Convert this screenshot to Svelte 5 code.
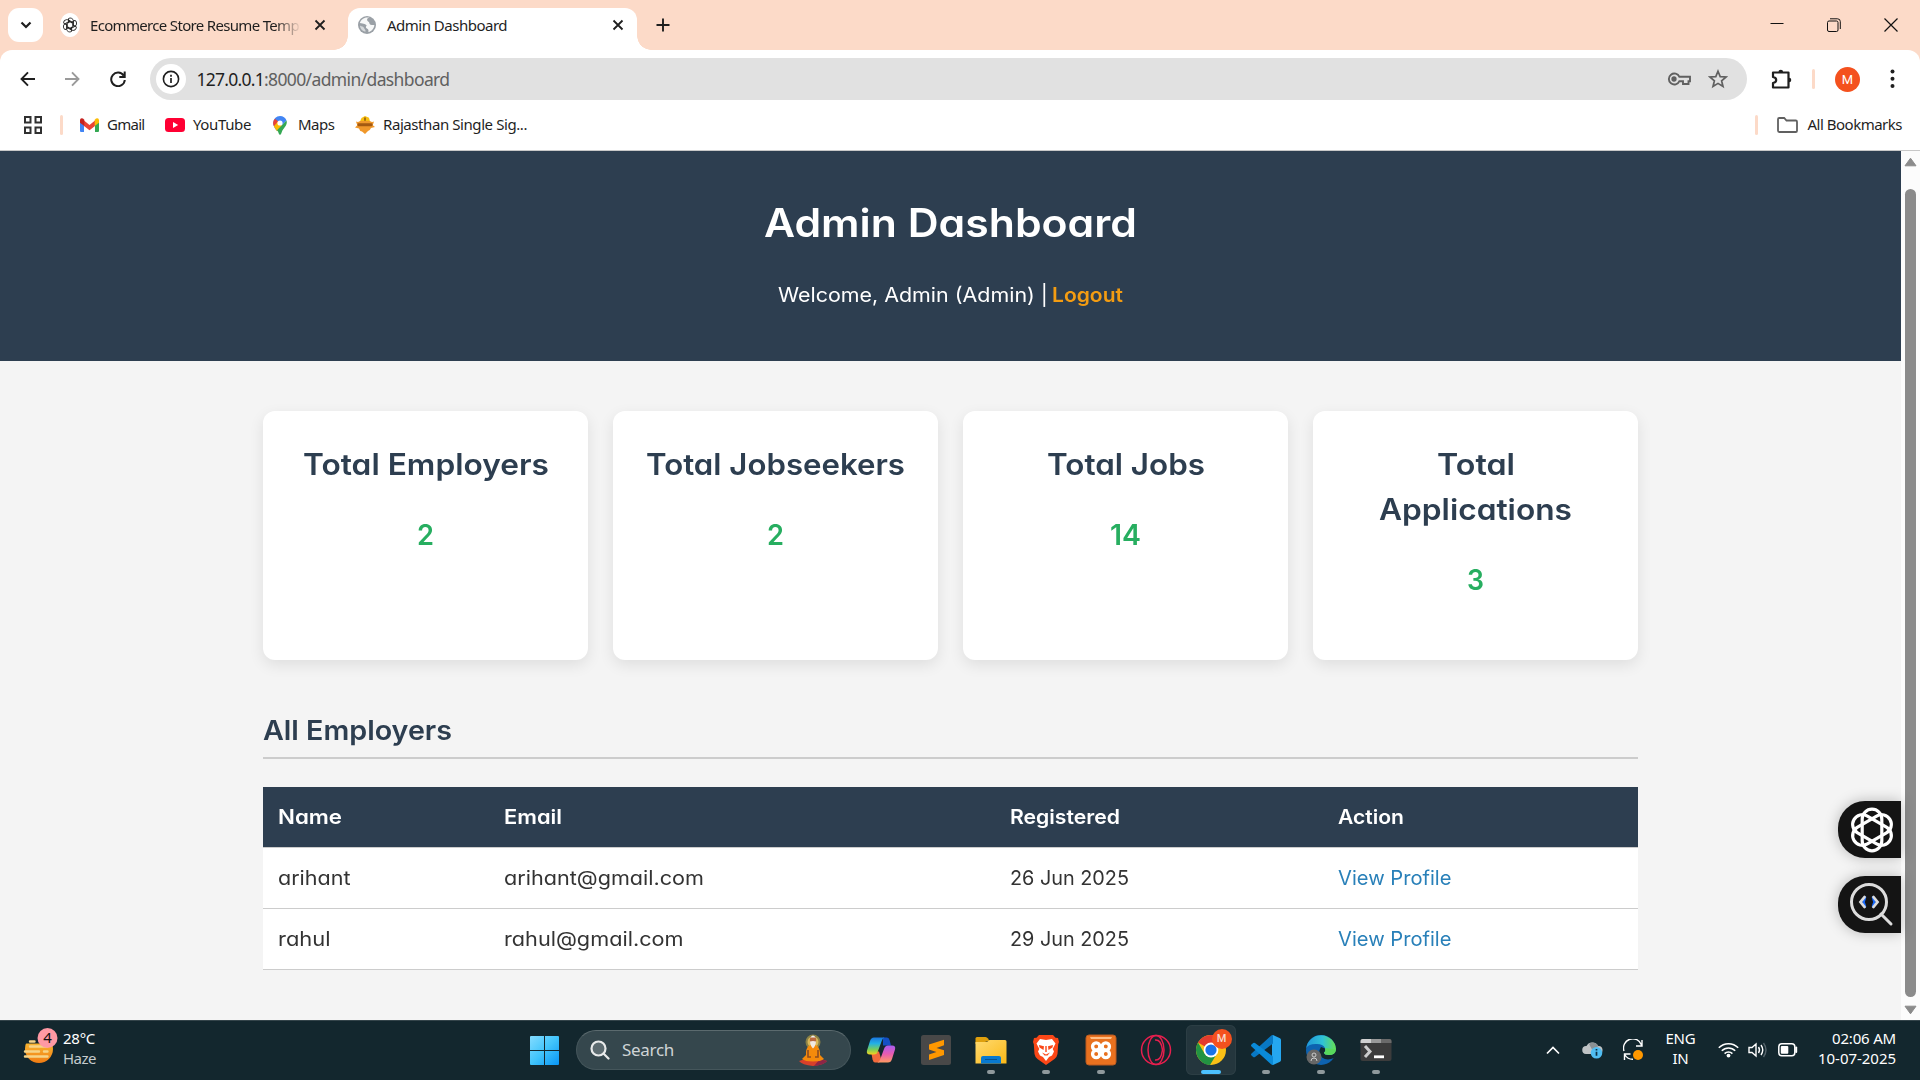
<script>
  const bookmarks = [
    { id: 'gmail', label: 'Gmail', width: 37.5 },
    { id: 'youtube', label: 'YouTube', width: 58 },
    { id: 'maps', label: 'Maps', width: 36.5 },
    { id: 'raj', label: 'Rajasthan Single Sig...', width: 144 }
  ];

  const stats = [
    { lines: [{ t: 'Total Employers', w: 246 }], value: '2', vw: 17 },
    { lines: [{ t: 'Total Jobseekers', w: 259 }], value: '2', vw: 17 },
    { lines: [{ t: 'Total Jobs', w: 158 }], value: '14', vw: 31 },
    { lines: [{ t: 'Total', w: 78 }, { t: 'Applications', w: 193 }], value: '3', vw: 17 }
  ];

  const columns = [
    { t: 'Name', w: 64 },
    { t: 'Email', w: 58 },
    { t: 'Registered', w: 110 },
    { t: 'Action', w: 66 }
  ];

  const employers = [
    { name: 'arihant', nw: 72.5, email: 'arihant@gmail.com', ew: 200, date: '26 Jun 2025' },
    { name: 'rahul', nw: 52.5, email: 'rahul@gmail.com', ew: 179.5, date: '29 Jun 2025' }
  ];

  const apps = [
    { id: 'copilot' },
    { id: 'sublime' },
    { id: 'folder', open: true },
    { id: 'brave', open: true },
    { id: 'xampp', open: true },
    { id: 'opera' },
    { id: 'chrome', active: true },
    { id: 'vscode', open: true },
    { id: 'edge', open: true },
    { id: 'terminal', open: true }
  ];

  // Spreads the letters of a label so that it takes the given width.
  function fit(node, width) {
    const natural = node.getBoundingClientRect().width;
    node.style.letterSpacing = `${(width - natural) / node.textContent.length}px`;
  }

  // Widens a label's glyphs so that it takes the given width.
  function stretch(node, width) {
    const natural = node.getBoundingClientRect().width;
    node.style.width = `${width}px`;
    node.style.transform = `scaleX(${width / natural})`;
  }
</script>

<div class="screen">
  <div class="tabstrip">
    <div class="tabsearch">
      <svg width="12" height="8" viewBox="0 0 12 8"><path d="M1.5 1.5 6 6l4.500-4.500" fill="none" stroke="#1f1f1f" stroke-width="2.200" /></svg>
    </div>
    <div class="tab idle">
      <svg class="fav" width="20" height="24" viewBox="-10 -12 20 24">
        <ellipse rx="10" ry="12" fill="#fff" />
        <g fill="none" stroke="#222" stroke-width=".9">
          {#each [0, 60, 120, 180, 240, 300] as a}
            <path d="M-1.500-6.500a3.300 3.300 0 0 1 5 2.600V1.200L0 3.200M-1.500-6.500v4.500" transform="rotate({a})" />
          {/each}
        </g>
      </svg>
      <span class="fade"><span class="fit" use:fit={209}>Ecommerce Store Resume Temp</span></span>
      <svg class="x" width="12" height="12" viewBox="0 0 12 12"><path d="m1.500 1.500 9 9m0-9-9 9" stroke="#1f1f1f" stroke-width="1.800" /></svg>
    </div>
    <div class="tab active">
      <svg class="fav" width="18" height="18" viewBox="0 0 18 18">
        <circle cx="9" cy="9" r="9" fill="#9aa0a6" />
        <path d="M10.500 1.500c-2 .5-2.600 1.600-1.900 2.900.7 1.200 2.200.7 2.400 2.200.3 1.800 2.400 1.900 5.300 1.400.2 3-1.300 6.500-5 7.800.2-1.900-.4-3-2-3.300-1.500-.4-1.300-2-.5-2.900-.8-1.200-3-1.400-7.100-1.500C2 4.500 5.500 1 10.500 1.500Z" fill="#f7f8f8" transform="rotate(8 9 9)" />
        <path d="M2 9.500c1.500 1.200 3.500 1 4 2.400.4 1.200 1.600 1.300 1.700 3.600C4.500 15.500 2.300 13 2 9.500Z" fill="#d5d8da" />
      </svg>
      <span class="fit" use:fit={120}>Admin Dashboard</span>
      <svg class="x" width="12" height="12" viewBox="0 0 12 12"><path d="m1.500 1.500 9 9m0-9-9 9" stroke="#1f1f1f" stroke-width="1.800" /></svg>
    </div>
    <svg class="plus" width="14" height="14" viewBox="0 0 14 14"><path d="M7 .5v13M.5 7h13" stroke="#1f1f1f" stroke-width="1.900" /></svg>
    <div class="winctl">
      <svg width="14" height="14" viewBox="0 0 14 14"><path d="M.5 5.500h13" stroke="#111" /></svg>
      <svg width="14" height="14" viewBox="0 0 14 14" fill="none" stroke="#111"><rect x=".5" y="3" width="10.500" height="10.500" rx="1.500" /><path d="M3 .8h7.500a2.800 2.800 0 0 1 2.800 2.800V11" /></svg>
      <svg width="14" height="14" viewBox="0 0 14 14"><path d="m.5.5 13 13m0-13-13 13" stroke="#111" stroke-width="1.200" /></svg>
    </div>
  </div>

  <div class="toolbar">
    <svg width="16" height="16" viewBox="0 0 16 16" fill="none" stroke="#1f1f1f" stroke-width="1.900"><path d="M15 8H2M8 1.300 1.500 8 8 14.700" /></svg>
    <svg class="fwd" width="16" height="16" viewBox="0 0 16 16" fill="none" stroke="#9a9a9a" stroke-width="1.900"><path d="M1 8h13M8 1.300 14.500 8 8 14.700" /></svg>
    <svg class="reload" width="16" height="16" viewBox="0 0 16 16" fill="none" stroke="#1f1f1f" stroke-width="2"><path d="M13.700 4.600A6.800 6.800 0 1 0 14.800 9M14.700.5v5.400H9.300" /></svg>
    <div class="omnibox">
      <div class="info">
        <svg width="18" height="18" viewBox="0 0 18 18"><circle cx="9" cy="9" r="7.600" fill="none" stroke="#1f1f1f" stroke-width="1.600" /><path d="M9 8v5M9 4.800v1.900" stroke="#1f1f1f" stroke-width="1.700" /></svg>
      </div>
      <span class="url"><span class="fit host" use:fit={67.5}>127.0.0.1</span><span class="fit" use:fit={185.5}>:8000/admin/dashboard</span></span>
      <svg class="key" width="24" height="14" viewBox="0 0 24 14" fill="none" stroke="#606060" stroke-width="1.900"><path d="M12.400 4.800A5.500 5.500 0 1 0 12.400 9.200H16V12h5.500V9.200H23V4.800Z" /><circle cx="7" cy="7" r="1.700" fill="#606060" /></svg>
      <svg class="star" width="20" height="20" viewBox="0 0 20 20"><path d="m10 2.200 2.200 5.400 5.900.4-4.500 3.800 1.400 5.700-5-3.100-5 3.100 1.400-5.700L1.900 8l5.900-.4Z" fill="none" stroke="#606060" stroke-width="1.700" /></svg>
    </div>
    <svg class="puzzle" width="22" height="22" viewBox="0 0 22 22"><path d="M2 4.500h15.500v15H2V15q3.200-.5 3.200-3T2 9Z" fill="none" stroke="#1f1f1f" stroke-width="2.200" stroke-linejoin="round" /><path d="M7.500 4a2.300 2.300 0 0 1 4.600 0ZM18 9.700a2.300 2.300 0 0 1 0 4.600Z" fill="#1f1f1f" /></svg>
    <i class="sep"></i>
    <span class="avatar">M</span>
    <svg class="more" width="5" height="20" viewBox="0 0 5 20"><circle cx="2.500" cy="2.500" r="2" /><circle cx="2.500" cy="9.700" r="2" /><circle cx="2.500" cy="17" r="2" /></svg>
  </div>

  <div class="bookmarks">
    <svg width="18" height="18" viewBox="0 0 18 18" fill="none" stroke="#303030" stroke-width="2"><path d="M1 1h5.500v5.500H1zM11.500 1H17v5.500h-5.500zM1 11.500h5.500V17H1zM11.500 11.500H17V17h-5.500z" /></svg>
    <i class="sep"></i>
    {#each bookmarks as b}
      <span class="bm {b.id}">
        {#if b.id === 'gmail'}
          <svg width="19" height="14" viewBox="0 0 19 14"><path d="M0 2v11q0 1 1 1h3V5Z" fill="#4285f4" /><path d="M19 2v11q0 1-1 1h-3V5Z" fill="#34a853" /><path d="M4 2.500 9.500 7 15 2.500V8l-5.500 4.300L4 8Z" fill="#ea4335" /><path d="M0 2Q.3-.6 3 .5L4.300 1.700V8L0 4.800Z" fill="#c5221f" /><path d="M19 2Q18.700-.6 16 .5l-1.300 1.200V8L19 4.800Z" fill="#fbbc04" /></svg>
        {:else if b.id === 'youtube'}
          <svg width="20" height="14" viewBox="0 0 20 14"><rect width="20" height="14" rx="3.500" fill="#ff0033" /><path d="m8 4 5.200 3L8 10Z" fill="#fff" /></svg>
        {:else if b.id === 'maps'}
          <svg width="14" height="19" viewBox="0 0 14 19"><path d="M7 0a7 7 0 0 1 6.500 4.500L4 15Q.2 11 .2 7A7 7 0 0 1 7 0Z" fill="#4285f4" /><path d="M2 2.700 7 7 1.500 11Q0 9 .1 7 0 4.500 2 2.700Z" fill="#ea4335" /><path d="M.9 10.200 5 5.500l4 4-5 5.700Q2 12.500.9 10.200Z" fill="#fbbc04" /><path d="M13.500 4.500C15 9 10.500 12 9 15.500Q8 19 7 19t-2-3.500l-1-1.300Z" fill="#34a853" /><circle cx="7" cy="7" r="2.600" fill="#fff" /></svg>
        {:else}
          <svg width="20" height="18" viewBox="0 0 20 18"><path d="M6.500 2 10 0l4 1.800 1 3.700H5Z" fill="#f9bf12" /><path d="M1 5.500q2 1 4-.5h10q2 1.500 4 .5-.5 2-1.500 3.500l2.500 2-4 1q-1 2.500-3 3L10 18l-3-2.500q-2.500-.5-3-3L0 11.500 2.500 9Q1.500 7.500 1 5.500Z" fill="#f0982b" /><rect x="2.500" y="7.200" width="15" height="3" rx="1" fill="#a35a12" /><path d="M10 1.500v3.200" stroke="#6b3b0c" stroke-width="1.200" /></svg>
        {/if}
        <span class="fit" use:fit={b.width}>{b.label}</span>
      </span>
    {/each}
    <span class="allbm">
      <i class="sep"></i>
      <svg width="21" height="16" viewBox="0 0 21 16"><path d="M1 13.500V2.200Q1 1 2.200 1h5L9.500 3.500h9.300Q20 3.500 20 4.700v9Q20 15 18.800 15H2.200Q1 15 1 13.500Z" fill="none" stroke="#606060" stroke-width="1.800" /></svg>
      <span class="fit" use:fit={94.5}>All Bookmarks</span>
    </span>
  </div>

  <div class="viewport">
    <div class="page">
      <header>
        <h1><span class="wide" use:stretch={373}>Admin Dashboard</span></h1>
        <p><span class="wide" use:stretch={270}>Welcome, Admin (Admin) |</span><a class="wide" href="#logout" use:stretch={71}>Logout</a></p>
      </header>
      <main>
        <section class="cards">
          {#each stats as s}
            <article>
              {#each s.lines as l}<h3><span class="wide" use:stretch={l.w}>{l.t}</span></h3>{/each}
              <p><span class="wide" use:stretch={s.vw}>{s.value}</span></p>
            </article>
          {/each}
        </section>
        <h2><span class="wide" use:stretch={189}>All Employers</span></h2>
        <div class="table">
          <div class="row head">
            {#each columns as c}<div><span class="wide" use:stretch={c.w}>{c.t}</span></div>{/each}
          </div>
          {#each employers as e}
            <div class="row">
              <div><span class="wide" use:stretch={e.nw}>{e.name}</span></div>
              <div><span class="wide" use:stretch={e.ew}>{e.email}</span></div>
              <div><span class="wide" use:stretch={119}>{e.date}</span></div>
              <div><a class="wide" href="#profile" use:stretch={113.5}>View Profile</a></div>
            </div>
          {/each}
        </div>
      </main>
      <div class="floaters">
        <div class="floater">
          <svg width="46" height="46" viewBox="-23 -23 46 46" fill="none" stroke="#fff" stroke-width="3.200">
            {#each [0, 60, 120] as a}
              <rect x="-9.800" y="-20.800" width="19.600" height="41.600" rx="9.800" transform="rotate({a})" />
            {/each}
          </svg>
        </div>
        <div class="floater">
          <svg width="46" height="46" viewBox="0 0 46 46" fill="none" stroke="#dcdcdc" stroke-width="3" stroke-linecap="round"><circle cx="20" cy="20" r="17.500" /><path d="m32 32 10 10" /><path d="M16 15.500 14.500 20l1.500 4.500M24 15.500l1.500 4.500-1.500 4.500" stroke="#1769ff" stroke-width="2.500" /><path d="M15.500 15 11.500 20l4 5M24.500 15l4 5-4 5" stroke-width="2.800" /></svg>
        </div>
      </div>
    </div>
    <div class="scrollbar">
      <svg width="13" height="10" viewBox="0 0 13 10"><path d="M6.500 1.200 12 8.800H1Z" fill="#8b8b8b" stroke="#8b8b8b" stroke-linejoin="round" /></svg>
      <div class="thumb"></div>
      <svg width="13" height="10" viewBox="0 0 13 10"><path d="M6.500 8.800 12 1.200H1Z" fill="#8b8b8b" stroke="#8b8b8b" stroke-linejoin="round" /></svg>
    </div>
  </div>

  <div class="taskbar">
    <div class="weather">
      <svg width="36" height="46" viewBox="0 0 36 46">
        <defs><linearGradient id="sun" x2="0" y2="1"><stop stop-color="#fbcb3c" /><stop offset="1" stop-color="#f17c13" /></linearGradient></defs>
        <circle cx="17" cy="22" r="14" fill="url(#sun)" />
        <path d="M0 6h20v10.500H0z" fill="#13272e" />
        <path d="M8 14.500h4.500M8 19.500h17M3 24.500h14M22 24.500h3.500M3 29.500h22.500" stroke="#f6d488" stroke-width="2.400" stroke-linecap="round" />
        <circle cx="25.500" cy="11" r="10" fill="#ff99a4" />
        <text x="25.500" y="16.300" text-anchor="middle" font-size="15" fill="#111">4</text>
      </svg>
      <div class="lines"><p><span class="fit" use:fit={32}>28°C</span></p><p class="dim"><span class="fit" use:fit={33}>Haze</span></p></div>
    </div>

    <div class="center">
      <svg width="29" height="29" viewBox="0 0 29 29">
        <defs><linearGradient id="win" x2="1" y2="1"><stop stop-color="#84dcff" /><stop offset=".5" stop-color="#41c4fb" /><stop offset="1" stop-color="#0895f5" /></linearGradient></defs>
        <path d="M1 0h13v14H0V1Q0 0 1 0ZM15 0h13q1 0 1 1v13H15ZM0 15h14v14H1q-1 0-1-1ZM15 15h14v13q0 1-1 1H15Z" fill="url(#win)" />
      </svg>
      <div class="search">
        <svg width="20" height="20" viewBox="0 0 20 20" fill="none" stroke="#e8eaea" stroke-width="2.200"><circle cx="8.500" cy="8.500" r="7" fill="#5c6b70" /><path d="m13.500 13.500 5 5" stroke-linecap="round" /></svg>
        <span class="fit" use:fit={52}>Search</span>
        <svg class="guru" width="30" height="32" viewBox="0 0 30 32">
          <circle cx="15" cy="8" r="7.500" fill="#8b8145" /><circle cx="15" cy="8" r="5.500" fill="#d9b85a" />
          <path d="M1 27q14-6 28 0-3 4-14 5Q4 31 1 27Z" fill="#d8402a" /><path d="M16 32q10-1 13-5l-7-2Z" fill="#8d2547" />
          <path d="M10.500 12q4.500-2.500 9 0 3 4 2.500 9l4 4q-3 2.500-11 2.500T4 25l4-4q-.5-6 2.500-9Z" fill="#f58a0b" />
          <path d="M10 16v7h3M20 16v7h-3" stroke="#8f4c20" stroke-width="1.600" fill="none" />
          <circle cx="15" cy="6" r="3.200" fill="#b9683f" /><path d="M12.500 3.500Q15-.5 17.500 3.500Z" fill="#eee" /><path d="M12 7.500q3-1 6 0-.5 5-3 7-2.500-2-3-7Z" fill="#f2e9e2" />
        </svg>
      </div>
      <div class="apps">
        {#each apps as app}
          <div class="app" class:active={app.active} class:open={app.open}>
            <svg width="32" height="32" viewBox="0 0 32 32">
              {#if app.id === 'copilot'}
                <defs>
                  <linearGradient id="ca" x2="0" y2="1"><stop stop-color="#1a77e0" /><stop offset=".35" stop-color="#22b0e6" /><stop offset=".7" stop-color="#77ce5c" /><stop offset="1" stop-color="#f5d21d" /></linearGradient>
                  <linearGradient id="cb" x2="0" y2="1"><stop stop-color="#a85df0" /><stop offset=".5" stop-color="#e85bb0" /><stop offset="1" stop-color="#ff9a62" /></linearGradient>
                </defs>
                <path d="M18 3.500h4q2 0 2.700 3l1.300 5h-8Z" fill="#1350c4" />
                <path d="M10 28.500h4q2-1 2-4l-2-7H6l1.500 8q.5 2.500 2.500 3Z" fill="#f26a3c" />
                <path d="M9 3.500h10.500q-2 .5-3 4L13 17q-1 3.500-4 3.500H5q-4 0-3-4L5 7q1-3.500 4-3.500Z" fill="url(#ca)" />
                <path d="M23 28.500H12.500q2-.5 3-4L19 15q1-3.500 4-3.500h4q4 0 3 4L27 25q-1 3.500-4 3.500Z" fill="url(#cb)" />
              {:else if app.id === 'sublime'}
                <rect x="1" y="1" width="30" height="30" rx="2.500" fill="#484848" />
                <path d="m9 10.500 15-4.700v5.500l-7.500 2.600L24 16.300V21L9 26v-5.500l7.500-2.600L9 15.600Z" fill="#ff9800" />
              {:else if app.id === 'folder'}
                <defs><linearGradient id="fo" x2="1" y2="1"><stop stop-color="#ffda70" /><stop offset="1" stop-color="#fbb917" /></linearGradient></defs>
                <path d="M.5 10V4.500Q.5 3 2 3h8.500q1.500 0 2.500 1.500L14.500 7Z" fill="#dfa00d" />
                <path d="M.5 8H12l2.500-2H30q1.500 0 1.500 1.500v22H.5Z" fill="url(#fo)" />
                <path d="M6 29.500V24q0-2 2-2h16q2 0 2 2v5.500Z" fill="#0879cf" /><path d="M10 25.500h12" stroke="#075391" />
              {:else if app.id === 'brave'}
                <path d="m9 1h14l2.500 2.700 2.500.3 1 4-.8 2.200L27.500 20q-.5 3-3 5L16 31l-8.500-6q-2.500-2-3-5L3.800 10.200 3 8l1-4 2.500-.3Z" fill="#fb4717" />
                <path d="m10 5 6 1 6-1 3.500 4.500-2.800 5.500 1.300 2.500-2 4-3 1.500L16 27l-3-4-3-1.500-2-4L9.300 15 6.500 9.500Z" fill="#fff" />
                <path d="m9 11 5 1.300-.5 3.700-4-2.500ZM23 11l-5 1.300.5 3.700 4-2.500ZM12 18.500l4 2 4-2-2.500 3H14.500ZM15.300 12h1.400v6h-1.400Z" fill="#fb4717" />
              {:else if app.id === 'xampp'}
                <rect x="1" y="1" width="30" height="30" rx="3" fill="#e8711f" stroke="#b95b21" /><path d="M5 3h22l-1 2H6Z" fill="#ffbd85" />
                <g fill="none" stroke="#fff" stroke-width="3.400"><circle cx="11.200" cy="12.500" r="3.600" /><circle cx="20.800" cy="12.500" r="3.600" /><circle cx="11.200" cy="20" r="3.600" /><circle cx="20.800" cy="20" r="3.600" /></g>
                <path d="M11.500 16.200h9" stroke="#fff" stroke-width="3.500" /><path d="M9.800 11.500h3v1.500h-3zM19.200 11.500h3v1.500h-3zM9.800 19.500h3V21h-3zM19.200 19.500h3V21h-3z" fill="#e8711f" />
              {:else if app.id === 'opera'}
                <g fill="none" stroke="#e61f4e" stroke-width="1.500"><circle cx="16" cy="16" r="14.500" /><ellipse cx="16" cy="16" rx="8" ry="14.500" /><path d="M15 6q6-1 7.500 10Q21 27 15 26" /></g>
              {:else if app.id === 'chrome'}
                <circle cx="16" cy="16" r="15" fill="#fbc116" />
                <path d="M16 16 3 8.500A15 15 0 0 1 29 8.500Z" fill="#e33b2e" /><path d="M3 8.500A15 15 0 0 0 15 31l7-11.500L16 16 9.500 19.500Z" fill="#229342" />
                <circle cx="16" cy="16" r="7.400" fill="#fff" /><circle cx="16" cy="16" r="5.600" fill="#1a73e8" />
              {:else if app.id === 'vscode'}
                <path d="m23 1 7 3.300q1 .5 1 1.700v20q0 1.200-1 1.700L23 31l-1-1V2Z" fill="#25a7f0" />
                <path d="M23 1v8.500L5 23q-1 .7-1.800 0L1.500 21.500q-1-1 0-2L21 1.800Q22 .8 23 1Z" fill="#0878c4" />
                <path d="M23 31v-8.500L5 9q-1-.7-1.800 0L1.500 10.500q-1 1 0 2L21 30.200Q22 31.200 23 31Z" fill="#0a8ad8" />
              {:else if app.id === 'edge'}
                <defs><linearGradient id="ed" x2="1"><stop stop-color="#2096d8" /><stop offset=".55" stop-color="#2fc2d6" /><stop offset="1" stop-color="#67e04f" /></linearGradient></defs>
                <circle cx="16" cy="16" r="15" fill="#0d62b0" />
                <path d="M1.200 14A15 15 0 0 1 31 15q0 6-7 6-5 0-5-2.500 2-1.500 1-4.500-2-4-8-4Q4 9.500 1.200 14Z" fill="url(#ed)" />
                <path d="M16 13q-4 6 1 10.500 5 3.500 12 .5l2-3v-5q-1 5-7 5-5 0-5-2.500 2-1.500 1-4Z" fill="#13272e" />
                <path d="M31 15.500q-.5 5.500-7 5.500-5 0-5-2.500 2-1.500 1-4.500Z" fill="#58d85c" />
                <circle cx="9" cy="23" r="7.500" fill="#666" /><circle cx="9" cy="21" r="2" fill="none" stroke="#ccc" /><path d="M6 27q0-3 3-3t3 3" fill="none" stroke="#ccc" />
              {:else}
                <rect x=".5" y="5" width="31" height="22" rx="2" fill="#3c3c3c" /><path d="M.5 9V7q0-2 2-2H11v4Z" fill="#d0d0d0" /><path d="M11 5h10v4H11Z" fill="#999" /><path d="M21 5h8.500q2 0 2 2v2H21Z" fill="#6a6a6a" />
                <path d="m5 12 5 5.500L5 23" stroke="#ccc" stroke-width="3" fill="none" /><path d="M14 22.800h10" stroke="#fff" stroke-width="2.800" />
              {/if}
            </svg>
            {#if app.active}<b>M</b>{/if}
          </div>
        {/each}
      </div>
    </div>

    <div class="tray">
      <svg width="14" height="9" viewBox="0 0 14 9"><path d="m1 7.500 6-6 6 6" fill="none" stroke="#fff" stroke-width="1.700" /></svg>
      <svg class="cloud" width="21" height="18" viewBox="0 0 21 18"><path d="M4 13a4 4 0 0 1 .5-8A6.500 6.500 0 0 1 16 5a4 4 0 0 1 1 8Z" fill="#bfc3c5" /><path d="M7 3a6 6 0 0 1 9.500 2.300L10 8.500Z" fill="#8b9194" /><circle cx="14.500" cy="11.800" r="5.800" fill="#50bdf2" /><path d="M14.500 10.800v4M14.500 8v1.500" stroke="#0d3044" stroke-width="1.700" /></svg>
      <svg class="sync" width="21" height="22" viewBox="0 0 21 22" fill="none" stroke="#fff" stroke-width="1.400"><path d="M1 12A9 9 0 0 1 18.500 6M19 1v6h-6M1.500 21v-6h6M2 16a9 9 0 0 0 8 4.300" /><circle cx="15" cy="16" r="5" fill="#ff9800" stroke="none" /></svg>
      <div class="lang lines"><p><span class="fit" use:fit={30}>ENG</span></p><p><span class="fit" use:fit={16}>IN</span></p></div>
      <svg class="wifi" width="21" height="16" viewBox="0 0 21 16" fill="none" stroke="#fff" stroke-width="1.600"><path d="M.8 5.800a13.500 13.500 0 0 1 19.400 0M3.800 8.800a9.300 9.300 0 0 1 13.400 0M6.600 11.600a5.400 5.400 0 0 1 7.800 0" /><circle cx="10.500" cy="13.600" r="1.900" fill="#fff" stroke="none" /></svg>
      <svg class="vol" width="20" height="16" viewBox="0 0 20 16" fill="none" stroke="#fff" stroke-width="1.400"><path d="M1 5.500h3L8 2v12l-4-3.500H1ZM10.500 5q2 3 0 6M13 3q3.500 5 0 10" /><path d="M15.500 1q5 7 0 14" stroke="#54636a" /></svg>
      <svg class="bat" width="20" height="14" viewBox="0 0 20 14"><rect x=".8" y=".8" width="16" height="12" rx="3" fill="none" stroke="#fff" stroke-width="1.500" /><rect x="2.800" y="3" width="7.500" height="7.800" rx="1" fill="#fff" /><path d="M18.200 4.500v4.500" stroke="#fff" stroke-width="2" stroke-linecap="round" /></svg>
      <div class="clock lines"><p><span class="fit" use:fit={64}>02:06 AM</span></p><p><span class="fit" use:fit={78}>10-07-2025</span></p></div>
    </div>
  </div>
</div>

<style>
  :global(body) { margin: 0; overflow: hidden; }
  .screen { width: 1920px; height: 1080px; display: flex; flex-direction: column; overflow: hidden; background: #fcdac8; font: 15px/20px "Noto Sans", "Open Sans", sans-serif; color: #1f1f1f; }
  .screen *, .screen { box-sizing: border-box; }
  svg { display: block; flex: none; }
  p, h1, h2, h3 { margin: 0; }
  a { text-decoration: none; }
  .fit, .wide { display: inline-block; white-space: pre; }
  .wide { transform-origin: 0 50%; text-align: left; }
  .sep { width: 3px; height: 20px; border-radius: 2px; background: #fcdac8; flex: none; }

  .tabstrip { height: 50px; display: flex; align-items: center; padding-left: 8px; }
  .tabsearch { width: 35px; height: 34px; border-radius: 11px; background: #fff; display: grid; place-items: center; }
  .tab { height: 42px; display: flex; align-items: center; padding-bottom: 8px; }
  .tab.idle { width: 305px; padding-left: 17px; margin-top: 8px; }
  .idle .fade { width: 211px; margin-left: 10px; -webkit-mask: linear-gradient(90deg, #000 88%, transparent); mask: linear-gradient(90deg, #000 88%, transparent); }
  .idle .x { margin-left: 13px; }
  .tab.active { position: relative; width: 289px; margin-top: 8px; padding-left: 10px; padding-right: 13.500px; background: #fff; border-radius: 12px 12px 0 0; }
  .active .fit { margin-left: 11px; }
  .active .x { margin-left: auto; }
  .tab.active::before, .tab.active::after { content: ""; position: absolute; bottom: 0; width: 14px; height: 14px; }
  .tab.active::before { left: -14px; background: radial-gradient(circle at 0 0, transparent 13.5px, #fff 14px); }
  .tab.active::after { right: -14px; background: radial-gradient(circle at 100% 0, transparent 13.5px, #fff 14px); }
  .plus { margin-left: 19px; }
  .winctl { margin-left: auto; display: flex; gap: 43px; padding-right: 22px; }

  .toolbar { height: 58px; display: flex; align-items: center; padding: 0 25px 0 20px; background: #fff; border-radius: 12px 12px 0 0; }
  .fwd { margin-left: 28px; }
  .reload { margin-left: 30px; }
  .omnibox { width: 1597px; height: 42px; margin-left: 24px; border-radius: 21px; background: #e1e1e1; display: flex; align-items: center; padding-left: 6px; padding-right: 19px; }
  .info { width: 30px; height: 30px; border-radius: 50%; background: #fff; display: grid; place-items: center; }
  .url { margin-left: 10.500px; font-size: 17.500px; line-height: 22px; color: #606060; white-space: nowrap; }
  .host { color: #1f1f1f; }
  .key { margin-left: auto; }
  .star { margin-left: 17.500px; }
  .puzzle { margin-left: 24px; }
  .toolbar .sep { margin-left: 19px; }
  .avatar { width: 25px; height: 25px; border-radius: 50%; background: #f4511e; color: #fff; margin-left: 20px; font: 13px/25px Roboto, sans-serif; text-align: center; }
  .more { margin-left: auto; fill: #1f1f1f; }

  .bookmarks { height: 43px; display: flex; align-items: center; padding: 0 18px 8px 23.500px; background: #fff; border-bottom: 1px solid #c8c8c8; }
  .bookmarks > .sep { margin-left: 18px; }
  .bookmarks .fit { padding-bottom: 2px; }
  .bm { display: flex; align-items: center; }
  .bm.gmail { margin-left: 17.500px; gap: 8px; }
  .bm.youtube { margin-left: 20.500px; gap: 8px; }
  .bm.maps { margin-left: 22px; gap: 11px; }
  .bm.raj { margin-left: 20.500px; gap: 8px; }
  .allbm { margin-left: auto; display: flex; align-items: center; }
  .allbm svg { margin: 0 9.500px 0 19px; }

  .viewport { height: 869px; display: flex; }
  .page { position: relative; width: 1901px; background: #f4f4f4; font-family: Inter, "Open Sans", sans-serif; font-feature-settings: "cv11"; color: #333; font-size: 20px; line-height: 30px; }
  header { height: 210px; background: #2d3e50; color: #fff; text-align: center; padding-top: 41.500px; }
  h1 { font-size: 39px; line-height: 60px; font-weight: 620; }
  header p { margin-top: 27.500px; display: flex; justify-content: center; gap: 4.500px; }
  header a { color: #f39c12; font-weight: 600; }
  main { width: 1375px; margin: 0 auto; padding-top: 50px; }
  .cards { display: grid; grid-template-columns: repeat(4, 325px); gap: 25px; text-align: center; }
  article { height: 249px; background: #fff; border-radius: 12px; padding-top: 30.500px; box-shadow: 0 5px 15px rgba(0, 0, 0, .09); }
  h3 { font-size: 29.500px; line-height: 45px; font-weight: 580; color: #2d3e50; }
  article p { margin-top: 27px; font-size: 28px; line-height: 42px; font-weight: 600; color: #27ae60; }
  h2 { margin-top: 49px; height: 50px; border-bottom: 2px solid #ccc; font-size: 27.500px; line-height: 42px; font-weight: 580; color: #2d3e50; }
  .table { margin-top: 28px; }
  .row { display: grid; grid-template-columns: 225.500px 506px 328.500px 1fr; height: 61px; border-bottom: 1px solid #ccc; background: #fff; }
  .row > div { padding: 15px 0 0 15px; }
  .row.head > div { background: #2d3e50; color: #fff; font-weight: 600; }
  .row a { color: #2980b9; }

  .floaters { position: absolute; right: 0; top: 650px; display: grid; gap: 18px; }
  .floater { width: 63px; height: 57px; background: #141414; border-radius: 27px 0 0 27px; padding: 6px 0 0 11px; box-shadow: 0 0 14px rgba(0, 0, 0, .25); }
  .scrollbar { width: 19px; background: #fcfcfc; display: flex; flex-direction: column; align-items: center; padding: 6px 0 5px; }
  .thumb { width: 11px; height: 808px; border-radius: 6px; background: #8b8b8b; margin: 22px 0 8px; }

  .taskbar { height: 60px; display: flex; align-items: center; background: #13272e; box-shadow: inset 0 1px #34444a; color: #fff; }
  .lines { padding-bottom: 4px; }
  .weather { width: 530px; padding-left: 22px; display: flex; align-items: center; gap: 5px; }
  .weather .dim { color: #c5cbcd; }
  .center { display: flex; align-items: center; }
  .search { width: 275px; height: 40px; margin-left: 17px; border-radius: 20px; background: #35474d; border: 1px solid #45565b; border-top-color: #5b6a6e; display: flex; align-items: center; padding: 0 22px 0 13px; font-size: 17px; color: #cfd4d6; }
  .search .fit { margin-left: 12px; padding-bottom: 1px; }
  .guru { margin-left: auto; }
  .apps { display: flex; gap: 5px; margin-left: 4.500px; }
  .app { position: relative; width: 50px; height: 50px; border-radius: 6px; display: grid; place-items: center; }
  .app.active { background: #24363d; box-shadow: inset 0 0 0 1px #2c3e44; }
  .app.open::after, .app.active::after { content: ""; position: absolute; bottom: 1px; left: 50%; width: 8px; height: 4px; margin-left: -4px; border-radius: 2px; background: #8f999c; }
  .app.active::after { width: 20px; margin-left: -10px; background: #4cc2ff; }
  .app b { position: absolute; left: 26px; top: 4px; width: 20px; height: 20px; border-radius: 50%; background: #f4511e; color: #f7d9ce; font: 500 11px/20px Roboto, sans-serif; text-align: center; }
  .tray { margin-left: auto; display: flex; align-items: center; padding-right: 24px; }
  .cloud { margin-left: 22px; }
  .sync { margin-left: 20px; }
  .lang { width: 30px; margin-left: 21.500px; text-align: center; }
  .wifi { margin-left: 22px; }
  .vol { margin-left: 9.500px; }
  .bat { margin-left: 10px; }
  .clock { width: 98px; text-align: right; }
</style>
